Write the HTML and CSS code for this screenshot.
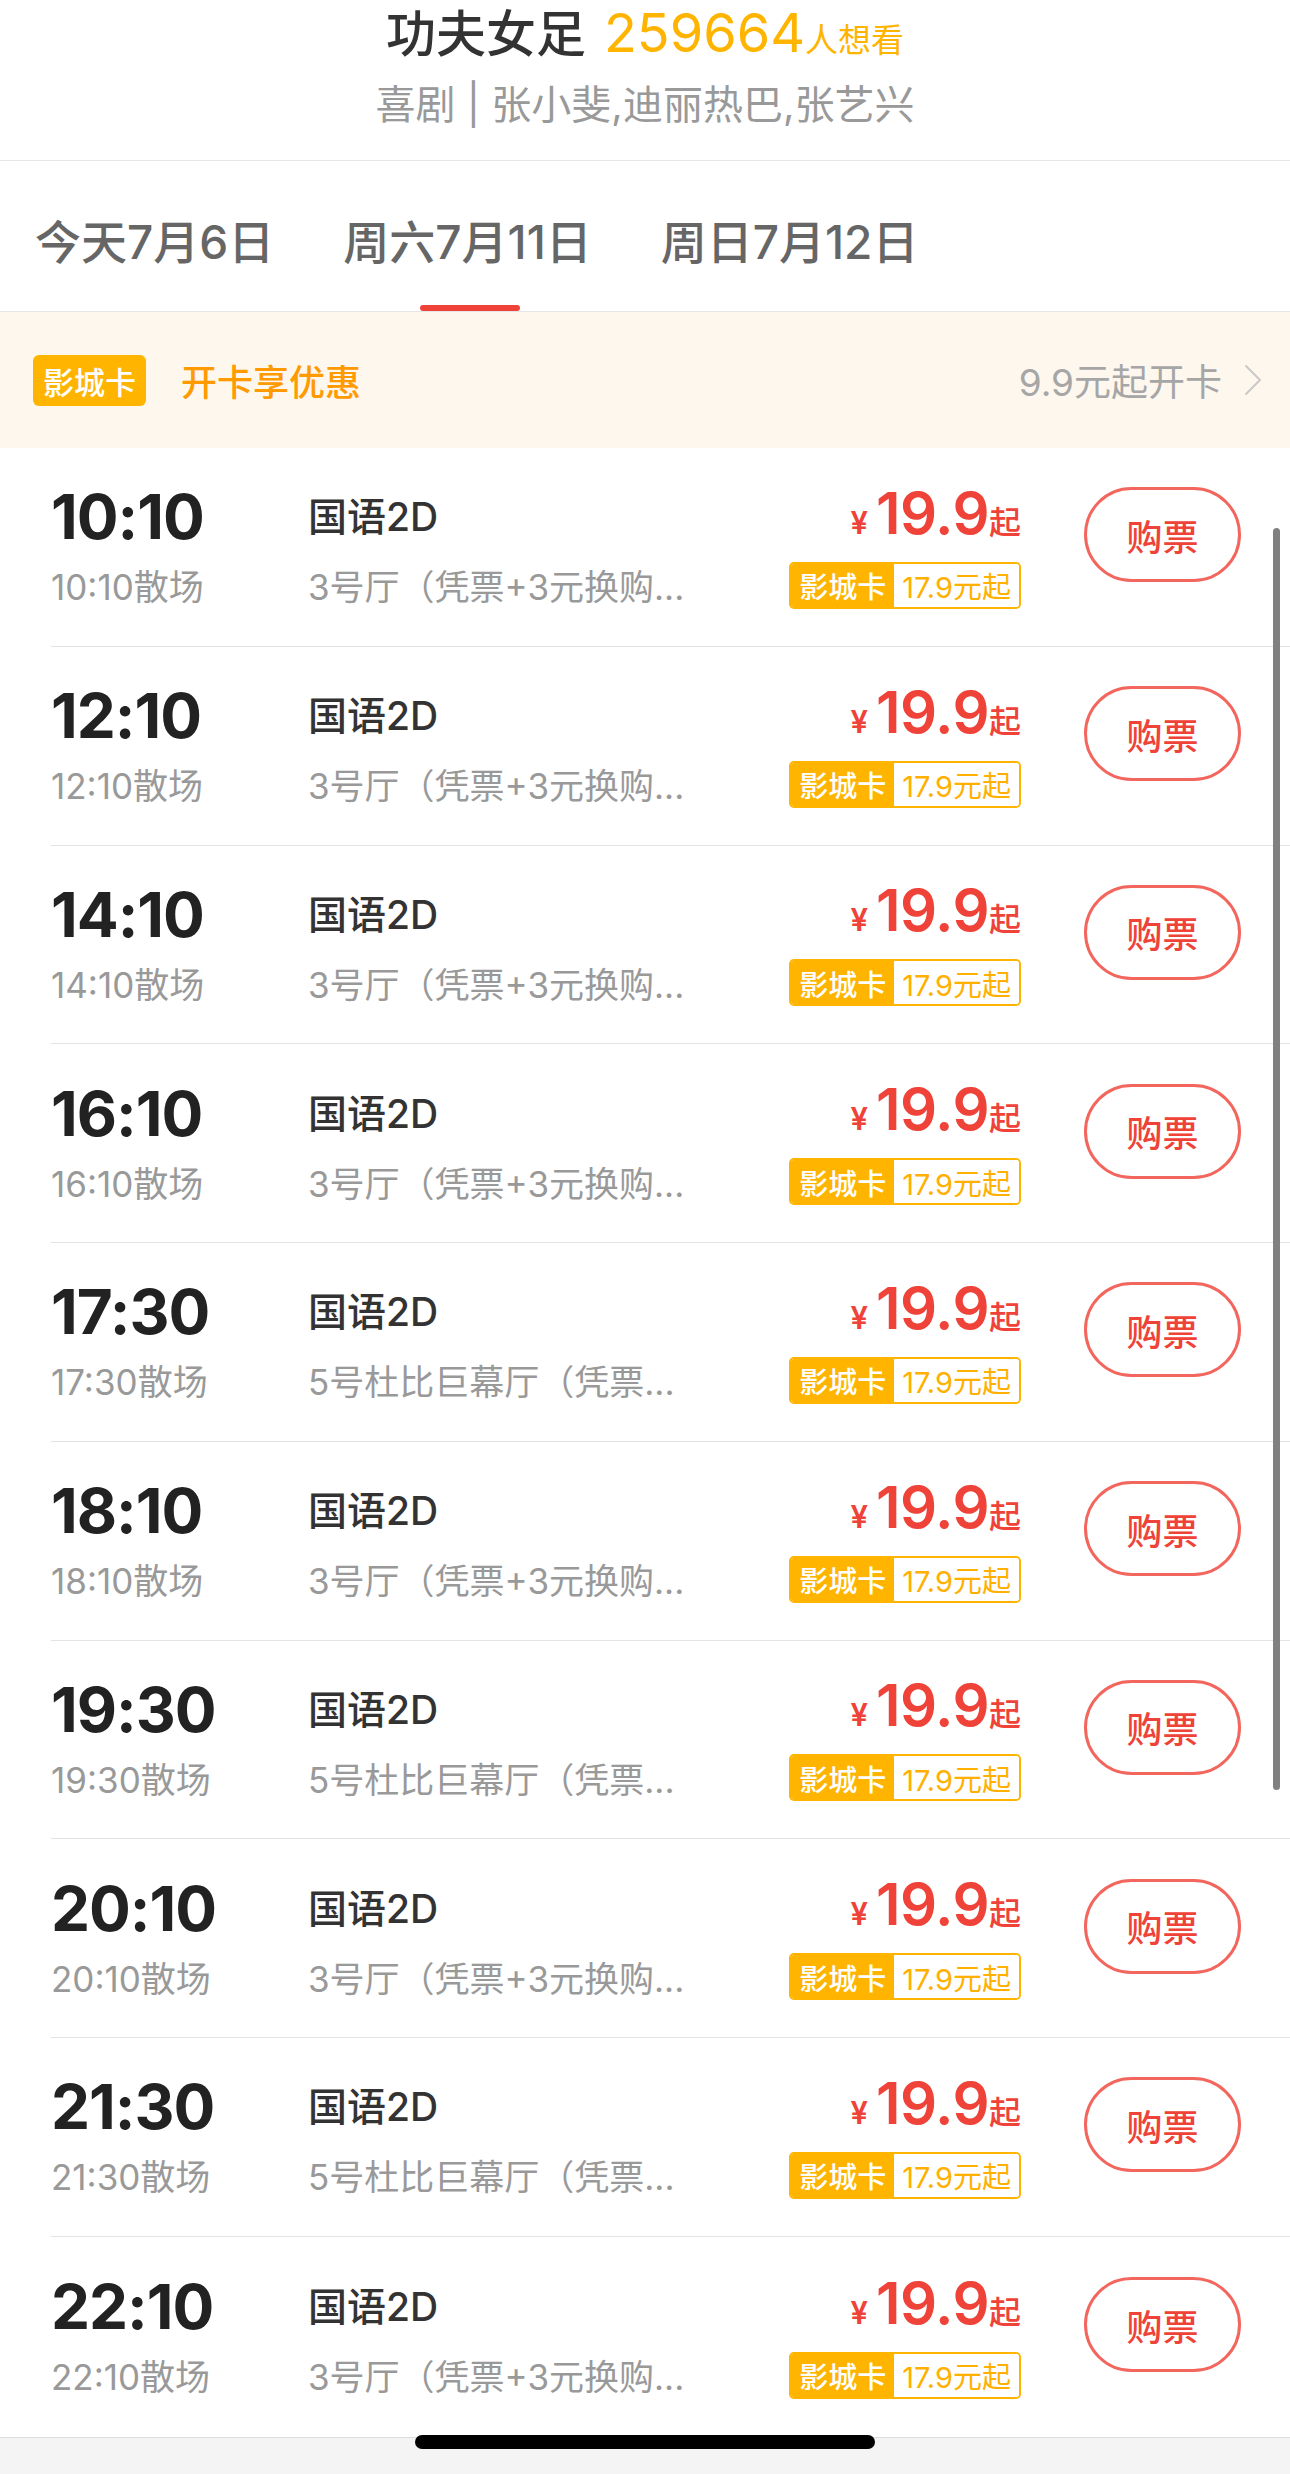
FILE: index.html
```html
<!DOCTYPE html>
<html lang="zh-CN">
<head>
<meta charset="utf-8">
<title>功夫女足 - 选座购票</title>
<link rel="stylesheet" href="styles.css">
</head>
<body>
<div class="screen">
  <header class="movie-head">
    <div class="title"><span class="name">功夫女足</span><span class="want"><span class="want-num">259664</span><span class="want-unit">人想看</span></span></div>
    <div class="meta">喜剧 | 张小斐,迪丽热巴,张艺兴</div>
  </header>

  <nav class="tabs">
    <div class="tab">今天7月6日</div>
    <div class="tab active">周六7月11日</div>
    <div class="tab">周日7月12日</div>
  </nav>

  <div class="card-bar">
    <span class="card-tag">影城卡</span>
    <span class="card-promo">开卡享优惠</span>
    <span class="card-link">9.9元起开卡<svg class="chev" width="18" height="32" viewBox="0 0 18 32"><polyline points="1.5,1.5 16,16 1.5,30.5" fill="none" stroke="#c9c9c9" stroke-width="2"/></svg></span>
  </div>

  <ul class="shows">
    <li class="show">
      <div class="col-time"><div class="time">10:10</div><div class="end">10:10散场</div></div>
      <div class="col-info"><div class="lang">国语2D</div><div class="hall">3号厅（凭票+3元换购...</div></div>
      <div class="col-price"><div class="price"><span class="yen">¥</span><span class="num">19.9</span><span class="qi">起</span></div><div class="vip"><span class="vip-l">影城卡</span><span class="vip-r">17.9元起</span></div></div>
      <button class="buy">购票</button>
    </li>
    <li class="show">
      <div class="col-time"><div class="time">12:10</div><div class="end">12:10散场</div></div>
      <div class="col-info"><div class="lang">国语2D</div><div class="hall">3号厅（凭票+3元换购...</div></div>
      <div class="col-price"><div class="price"><span class="yen">¥</span><span class="num">19.9</span><span class="qi">起</span></div><div class="vip"><span class="vip-l">影城卡</span><span class="vip-r">17.9元起</span></div></div>
      <button class="buy">购票</button>
    </li>
    <li class="show">
      <div class="col-time"><div class="time">14:10</div><div class="end">14:10散场</div></div>
      <div class="col-info"><div class="lang">国语2D</div><div class="hall">3号厅（凭票+3元换购...</div></div>
      <div class="col-price"><div class="price"><span class="yen">¥</span><span class="num">19.9</span><span class="qi">起</span></div><div class="vip"><span class="vip-l">影城卡</span><span class="vip-r">17.9元起</span></div></div>
      <button class="buy">购票</button>
    </li>
    <li class="show">
      <div class="col-time"><div class="time">16:10</div><div class="end">16:10散场</div></div>
      <div class="col-info"><div class="lang">国语2D</div><div class="hall">3号厅（凭票+3元换购...</div></div>
      <div class="col-price"><div class="price"><span class="yen">¥</span><span class="num">19.9</span><span class="qi">起</span></div><div class="vip"><span class="vip-l">影城卡</span><span class="vip-r">17.9元起</span></div></div>
      <button class="buy">购票</button>
    </li>
    <li class="show">
      <div class="col-time"><div class="time">17:30</div><div class="end">17:30散场</div></div>
      <div class="col-info"><div class="lang">国语2D</div><div class="hall">5号杜比巨幕厅（凭票...</div></div>
      <div class="col-price"><div class="price"><span class="yen">¥</span><span class="num">19.9</span><span class="qi">起</span></div><div class="vip"><span class="vip-l">影城卡</span><span class="vip-r">17.9元起</span></div></div>
      <button class="buy">购票</button>
    </li>
    <li class="show">
      <div class="col-time"><div class="time">18:10</div><div class="end">18:10散场</div></div>
      <div class="col-info"><div class="lang">国语2D</div><div class="hall">3号厅（凭票+3元换购...</div></div>
      <div class="col-price"><div class="price"><span class="yen">¥</span><span class="num">19.9</span><span class="qi">起</span></div><div class="vip"><span class="vip-l">影城卡</span><span class="vip-r">17.9元起</span></div></div>
      <button class="buy">购票</button>
    </li>
    <li class="show">
      <div class="col-time"><div class="time">19:30</div><div class="end">19:30散场</div></div>
      <div class="col-info"><div class="lang">国语2D</div><div class="hall">5号杜比巨幕厅（凭票...</div></div>
      <div class="col-price"><div class="price"><span class="yen">¥</span><span class="num">19.9</span><span class="qi">起</span></div><div class="vip"><span class="vip-l">影城卡</span><span class="vip-r">17.9元起</span></div></div>
      <button class="buy">购票</button>
    </li>
    <li class="show">
      <div class="col-time"><div class="time">20:10</div><div class="end">20:10散场</div></div>
      <div class="col-info"><div class="lang">国语2D</div><div class="hall">3号厅（凭票+3元换购...</div></div>
      <div class="col-price"><div class="price"><span class="yen">¥</span><span class="num">19.9</span><span class="qi">起</span></div><div class="vip"><span class="vip-l">影城卡</span><span class="vip-r">17.9元起</span></div></div>
      <button class="buy">购票</button>
    </li>
    <li class="show">
      <div class="col-time"><div class="time">21:30</div><div class="end">21:30散场</div></div>
      <div class="col-info"><div class="lang">国语2D</div><div class="hall">5号杜比巨幕厅（凭票...</div></div>
      <div class="col-price"><div class="price"><span class="yen">¥</span><span class="num">19.9</span><span class="qi">起</span></div><div class="vip"><span class="vip-l">影城卡</span><span class="vip-r">17.9元起</span></div></div>
      <button class="buy">购票</button>
    </li>
    <li class="show">
      <div class="col-time"><div class="time">22:10</div><div class="end">22:10散场</div></div>
      <div class="col-info"><div class="lang">国语2D</div><div class="hall">3号厅（凭票+3元换购...</div></div>
      <div class="col-price"><div class="price"><span class="yen">¥</span><span class="num">19.9</span><span class="qi">起</span></div><div class="vip"><span class="vip-l">影城卡</span><span class="vip-r">17.9元起</span></div></div>
      <button class="buy">购票</button>
    </li>
  </ul>

  <div class="footer"></div>
  <div class="scrollbar"></div>
  <div class="home-indicator"></div>
</div>
</body>
</html>
```

FILE: styles.css
```css
* { box-sizing: border-box; margin: 0; padding: 0; }

html, body {
  margin: 0;
  width: 1290px;
  height: 2474px;
  overflow: hidden;
  background: #fff;
  font-family: Inter, "Noto Sans CJK SC", "Noto Sans", sans-serif;
}

.screen {
  position: relative;
  width: 1290px;
  height: 2474px;
  overflow: hidden;
  display: flex;
  flex-direction: column;
}

/* header */
.movie-head {
  height: 161px;
  flex: none;
  border-bottom: 1px solid #e6e6e6;
  display: flex;
  flex-direction: column;
  align-items: center;
}
.title {
  font-size: 50px;
  line-height: 66px;
  font-weight: 500;
  color: #333;
  white-space: nowrap;
}
.want { color: #ffb400; margin-left: 18px; font-weight: 400; }
.want-num { font-size: 54px; }
.want-unit { font-size: 33px; }
.meta {
  margin-top: 7px;
  font-size: 40px;
  line-height: 50px;
  color: #999;
  white-space: nowrap;
}

/* date tabs */
.tabs {
  height: 151px;
  flex: none;
  border-bottom: 1px solid #e6e6e6;
  display: flex;
  gap: 69px;
  padding-left: 35px;
}
.tab {
  position: relative;
  display: flex;
  align-items: center;
  padding-top: 5px;
  font-size: 46px;
  font-weight: 500;
  color: #666;
  white-space: nowrap;
}
.tab.active::after {
  content: "";
  position: absolute;
  left: 50%;
  bottom: 0;
  width: 100px;
  height: 6px;
  margin-left: -48px;
  border-radius: 3px;
  background: #ef4238;
}

/* card promo bar */
.card-bar {
  height: 136px;
  flex: none;
  background: #fef7ee;
  display: flex;
  align-items: center;
  padding: 0 28px 0 33px;
}
.card-tag {
  height: 51px;
  padding: 0 10px;
  display: flex;
  align-items: center;
  border-radius: 6px;
  background: #ffb400;
  color: #fff;
  font-size: 31px;
  font-weight: 500;
}
.card-promo {
  margin-left: 35px;
  font-size: 36px;
  font-weight: 500;
  color: #ff9a00;
}
.card-link {
  margin-left: auto;
  display: flex;
  align-items: center;
  font-size: 37px;
  color: #a6a6a6;
}
.chev { margin-left: 22px; }

/* show list */
.shows {
  list-style: none;
  margin-left: 51px;
  flex: none;
}
.show {
  height: 198.75px;
  border-bottom: 1px solid #e3e3e3;
  display: flex;
  align-items: center;
}
.show:last-child {
  height: 200px;
  border-bottom: none;
}
.col-time {
  width: 257px;
  flex: none;
  display: flex;
  flex-direction: column;
}
.time {
  font-size: 62px;
  line-height: 62px;
  font-weight: 700;
  color: #222;
  letter-spacing: -1px;
}
.end, .hall {
  margin-top: 19px;
  font-size: 35px;
  line-height: 40px;
  color: #999;
  white-space: nowrap;
}
.col-info {
  flex: 1;
  min-width: 0;
  display: flex;
  flex-direction: column;
}
.lang {
  font-size: 39px;
  line-height: 62px;
  font-weight: 500;
  color: #333;
}
.col-price {
  flex: none;
  display: flex;
  flex-direction: column;
  align-items: flex-end;
}
.price {
  line-height: 56px;
  color: #ef4238;
  white-space: nowrap;
}
.yen { font-size: 31px; font-weight: 600; margin-right: 8px; }
.num { font-size: 58px; font-weight: 600; letter-spacing: -0.5px; }
.qi { font-size: 32px; font-weight: 500; }
.vip {
  margin-top: 6px;
  height: 47px;
  display: flex;
  border: 2px solid #ffb400;
  border-radius: 5px;
  overflow: hidden;
  font-size: 29px;
  white-space: nowrap;
}
.vip-l {
  display: flex;
  align-items: center;
  padding: 0 8px;
  background: #ffb400;
  color: #fff;
  font-weight: 500;
}
.vip-r {
  display: flex;
  align-items: center;
  padding: 0 8px;
  background: #fff;
  color: #ffb000;
}
.buy {
  flex: none;
  width: 157px;
  height: 95px;
  margin: 0 49px 24px 63px;
  border: 3px solid #f2665e;
  border-radius: 48px;
  background: #fff;
  color: #ef4238;
  font-family: inherit;
  font-size: 36px;
  font-weight: 500;
}

/* bottom */
.footer {
  flex: 1;
  border-top: 1px solid #dcdcdc;
  background: #f4f4f4;
}
.scrollbar {
  position: absolute;
  right: 10px;
  top: 528px;
  width: 7px;
  height: 1262px;
  border-radius: 4px;
  background: #808080;
}
.home-indicator {
  position: absolute;
  left: 415px;
  bottom: 25px;
  width: 460px;
  height: 14px;
  border-radius: 7px;
  background: #000;
}
```
